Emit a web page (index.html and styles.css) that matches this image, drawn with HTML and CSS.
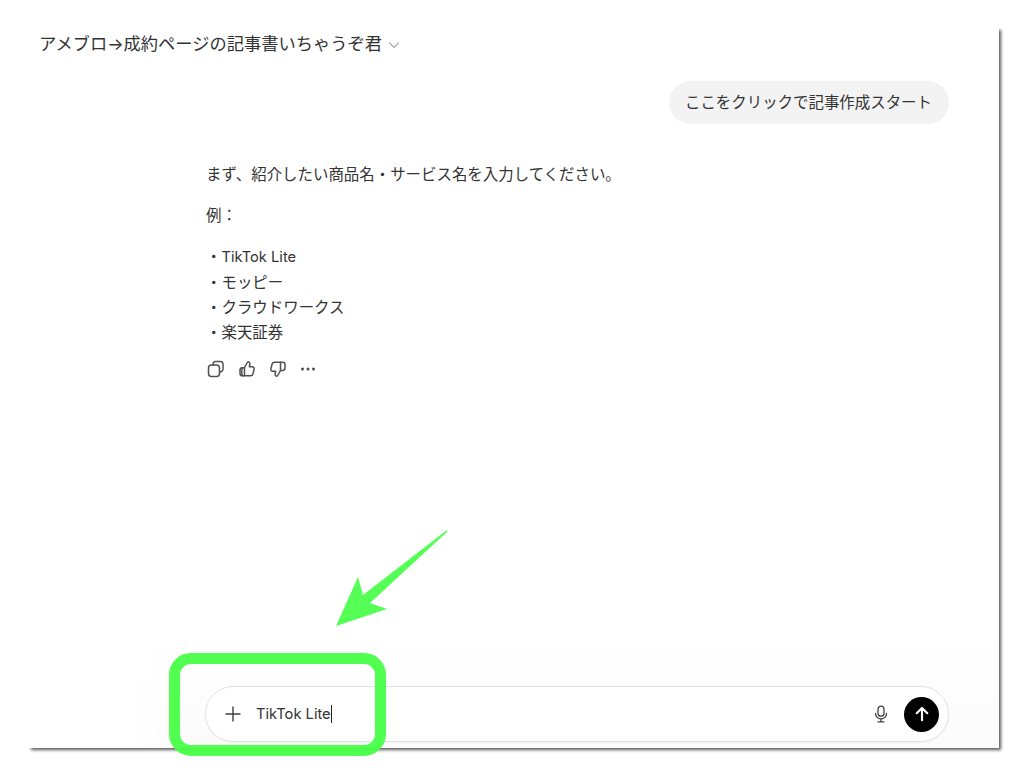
FILE: index.html
```html
<!DOCTYPE html>
<html lang="ja">
<head>
<meta charset="utf-8">
<title>アメブロ→成約ページの記事書いちゃうぞ君</title>
<link rel="stylesheet" href="styles.css">
</head>
<body>
<main class="window">
  <header class="topbar">
    <span class="title">アメブロ→成約ページの記事書いちゃうぞ君</span>
    <svg class="chevron" viewBox="0 0 12 12" width="12" height="12"><path d="M1.500 3.800 6 8.300l4.500-4.500" fill="none" stroke="#a3a3a3" stroke-width="1.200" stroke-linecap="round" stroke-linejoin="round"/></svg>
  </header>
  <section class="user-row"><div class="bubble">ここをクリックで記事作成スタート</div></section>
  <section class="reply">
    <p>まず、紹介したい商品名・サービス名を入力してください。</p>
    <p class="example">例：</p>
    <p>・<span class="latin">TikTok Lite</span><br>・モッピー<br>・クラウドワークス<br>・楽天証券</p>
    <div class="actions">
      <svg class="icon" viewBox="0 0 18 18" width="18" height="18"><rect x="1.500" y="5" width="11" height="11.500" rx="3"/><path d="M6 5V4.200a2.700 2.700 0 0 1 2.700-2.700h4.600a2.700 2.700 0 0 1 2.700 2.700v4.900a2.900 2.900 0 0 1-3.500 2.800"/></svg>
      <svg class="icon" viewBox="0 0 18 18" width="18" height="18"><path d="M6.500 7.500 9.300 2.500c.3-.6 1-.9 1.500-.6.900.4 1.300 1.200 1.100 2.100L11.300 6.700h2.900c1.300 0 2.200 1.200 1.900 2.400l-1.200 4.900c-.3 1.100-1.200 1.800-2.300 1.800H6.500z"/><path d="M6.500 7.700H4.200C3 7.700 2 8.700 2 9.900v3.300c0 1.400 1 2.600 2.300 2.600h2.200"/><path d="M4.800 7.900c-.7.500-1 1.200-1 2.100v3.300c0 .9.300 1.700 1 2.300"/></svg>
      <svg class="icon" viewBox="0 0 18 18" width="18" height="18"><path d="M11.500 10.500 8.700 15.500c-.3.600-1 .9-1.500.6-.9-.4-1.300-1.200-1.100-2.100l.6-2.700H3.800c-1.300 0-2.200-1.200-1.900-2.400L3.100 4c.3-1.100 1.200-1.800 2.300-1.800h6.100z"/><path d="M11.500 2.200h2.300c1.200 0 2.200 1 2.200 2.200v3.700c0 1.300-1 2.400-2.300 2.400h-2.200"/></svg>
      <svg class="icon dots" viewBox="0 0 18 18" width="18" height="18"><circle cx="3.500" cy="9" r="1.500"/><circle cx="9" cy="9" r="1.500"/><circle cx="14.500" cy="9" r="1.500"/></svg>
    </div>
  </section>
  <footer class="composer-area">
    <form class="composer">
      <svg class="plus" viewBox="0 0 16 16" width="16" height="16"><path d="M8 1v14M1 8h14" fill="none" stroke="#404040" stroke-width="1.400" stroke-linecap="round"/></svg>
      <span class="typed">TikTok Lite</span><span class="caret"></span>
      <span class="spacer"></span>
      <svg class="mic" viewBox="0 0 16 18" width="16" height="18"><rect x="5" y="1.200" width="6" height="10" rx="3"/><path d="M2.500 8.500a5.500 5.500 0 0 0 11 0M8 14v2.800M5 16.800h6"/></svg>
      <span class="send"><svg viewBox="0 0 16 16" width="18" height="18"><path d="M8 13.500V2.800M3.300 7.300 8 2.600l4.700 4.700" fill="none" stroke="#fff" stroke-width="1.900" stroke-linecap="round" stroke-linejoin="round"/></svg></span>
    </form>
  </footer>
</main>
<svg class="arrow" viewBox="0 0 1024 774" width="1024" height="774"><polygon points="447,530 363,595 358,577 336,626 387,609 370,603 447,532"/></svg>
<div class="highlight"></div>
</body>
</html>
```
FILE: styles.css
```css
* { box-sizing: border-box; }
html, body { margin: 0; padding: 0; }
body {
  width: 1024px;
  height: 774px;
  padding-top: 28px;
  background: #fff;
  overflow: hidden;
  position: relative;
  font-family: "Inter", "Noto Sans CJK JP", sans-serif;
  color: #333;
}
.window {
  width: 970px;
  height: 720px;
  margin-left: 29px;
  background: #fff;
  box-shadow: 2px 2px 3px rgba(0,0,0,.65);
  clip-path: inset(0 -10px -10px 0);
  display: flex;
  flex-direction: column;
}
.topbar {
  height: 30px;
  margin-top: 1px;
  padding-left: 10px;
  display: flex;
  align-items: center;
  gap: 6px;
}
.title { font-size: 17.25px; line-height: 30px; color: #333; }
.chevron { margin-top: 2px; }
.user-row {
  display: flex;
  justify-content: flex-end;
  margin-top: 22px;
  padding-right: 50px;
}
.bubble {
  height: 43px;
  padding: 0 17px 0 16px;
  border-radius: 22px;
  background: #f3f3f3;
  font-size: 15.45px;
  line-height: 43px;
  color: #333;
}
.reply {
  margin-top: 38px;
  padding-left: 177px;
  font-size: 15.45px;
  line-height: 25px;
  color: #333;
}
.reply p { margin: 0 0 16px; }
.reply .example { margin-bottom: 15.5px; }
.latin { font-size: 14.7px; }
.actions {
  display: flex;
  gap: 13px;
  margin-top: -1px;
  height: 18px;
  padding-left: 1px;
}
.icon { fill: none; stroke: #505050; stroke-width: 1.500; stroke-linejoin: round; stroke-linecap: round; }
.dots { fill: #505050; stroke: none; margin-left: -1px; }
.composer-area {
  margin-top: auto;
  height: 110px;
  padding: 48px 50px 0 176px;
  background:
    linear-gradient(to right, #fff 100px, rgba(255,255,255,0) 150px),
    linear-gradient(to bottom, #fff 0, #fbfbfb 100%);
}
.composer {
  height: 56px;
  border: 1px solid #e3e3e3;
  border-radius: 28px;
  background: #fff;
  display: flex;
  align-items: center;
  padding: 0 9px 0 19px;
  box-shadow: 0 1px 2px rgba(0,0,0,.04);
}
.typed { margin-left: 15px; font-size: 14.7px; color: #333; }
.caret { width: 1px; height: 18px; background: #222; }
.spacer { flex: 1; }
.mic { fill: none; stroke: #404040; stroke-width: 1.300; stroke-linecap: round; margin-right: 15px; }
.send {
  width: 35px;
  height: 35px;
  border-radius: 50%;
  background: #000;
  display: flex;
  align-items: center;
  justify-content: center;
}
.arrow { position: absolute; left: 0; top: 0; pointer-events: none; }
.arrow polygon { fill: #55ff55; }
.highlight {
  position: absolute;
  left: 169px;
  top: 653px;
  width: 217px;
  height: 103px;
  border: 11px solid rgba(72,255,72,.95);
  border-radius: 22px;
}
```
